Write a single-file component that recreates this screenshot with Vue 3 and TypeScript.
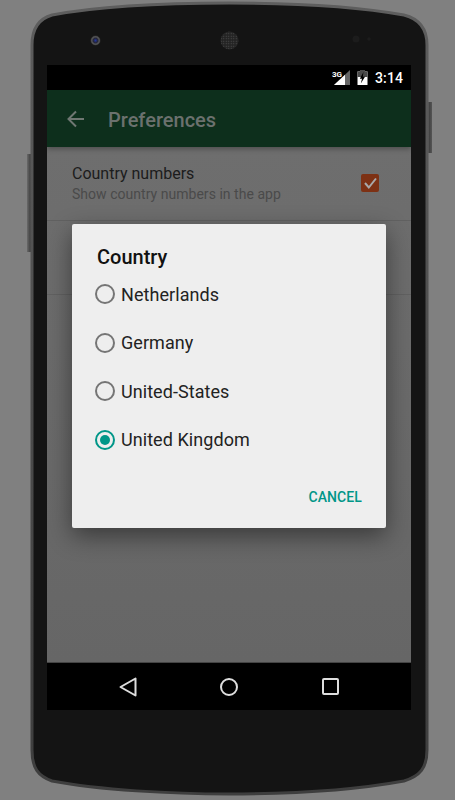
<script setup lang="ts">
const countries = [
  { name: 'Netherlands', checked: false },
  { name: 'Germany', checked: false },
  { name: 'United-States', checked: false },
  { name: 'United Kingdom', checked: true },
]
</script>

<template>
  <div class="stage">
    <div class="phone">
      <svg class="shell" width="455" height="800" viewBox="0 0 455 800" aria-hidden="true">
        <defs>
          <pattern id="mesh" width="2.500" height="2.500" patternUnits="userSpaceOnUse">
            <rect width="2.500" height="2.500" fill="#232323" />
            <circle cx="1.250" cy="1.250" r=".6" fill="#4e4e4e" />
          </pattern>
          <radialGradient id="lens">
            <stop offset="0" stop-color="#2436a0" />
            <stop offset=".45" stop-color="#24263a" />
            <stop offset=".75" stop-color="#585858" />
            <stop offset="1" stop-color="#2a2a2a" />
          </radialGradient>
          <linearGradient id="key" x1="0" x2="1" y1="0" y2="0">
            <stop offset="0" stop-color="#6a6a6a" />
            <stop offset=".5" stop-color="#444" />
            <stop offset="1" stop-color="#555" />
          </linearGradient>
          <linearGradient id="edge" x1="0" x2="0" y1="0" y2="1">
            <stop offset="0" stop-color="#5e5e5e" />
            <stop offset=".5" stop-color="#4c4c4c" />
            <stop offset="1" stop-color="#3e3e3e" />
          </linearGradient>
        </defs>
        <rect x="27" y="154" width="6" height="98" fill="url(#key)" />
        <rect x="427" y="102" width="5" height="51" fill="url(#key)" />
        <path class="body" d="M32 45C32 30 38 19 52 15C100 6 170 3 229 3C290 3 355 6 404 15C420 19 427 30 427 45L427 750C427 768 420 776 404 781C355 790 290 794 229 794C170 794 100 790 52 781C38 776 32 768 32 750Z" />
        <circle cx="95.500" cy="40.500" r="5" fill="url(#lens)" />
        <circle cx="229.500" cy="40.500" r="9" fill="url(#mesh)" />
        <circle cx="356" cy="39" r="3.500" fill="#1c1c1c" />
        <circle cx="369" cy="39" r="1.800" fill="#1c1c1c" />
      </svg>

      <div class="screen">
        <div class="status">
          <span class="net">3G</span>
          <svg class="signal" width="16" height="15" viewBox="0 0 16 15" aria-hidden="true">
            <path d="M0 15L16 0V15Z" fill="#666" />
            <path d="M0 15L11 4.700V15Z" fill="#fff" />
          </svg>
          <svg class="battery" width="11" height="15" viewBox="0 0 11 15" aria-hidden="true">
            <path d="M3 1.500V0H8V1.500H10.500V15H.5V1.500Z" fill="#fff" />
            <path d="M3 1.500V0H8V1.500H10.500V7H.5V1.500Z" fill="#4a4a4a" />
            <path d="M6.500 2L2.800 8.800H5L3.800 13.500L8 6.800H5.800Z" fill="#000" />
          </svg>
          <span class="time">3:14</span>
        </div>

        <div class="appbar">
          <svg class="back" width="18" height="18" viewBox="0 0 18 18" aria-hidden="true">
            <path d="M17 9H2M9 1.500L1.500 9L9 16.500" fill="none" stroke="#6f7772" stroke-width="2" />
          </svg>
          <span class="title">Preferences</span>
        </div>

        <div class="content">
          <div class="pref">
            <div class="pref-text">
              <div class="pref-name">Country numbers</div>
              <div class="pref-desc">Show country numbers in the app</div>
            </div>
            <div class="checkbox">
              <svg width="18" height="18" viewBox="0 0 18 18" aria-hidden="true">
                <path d="M4 9L7.800 13.500L15 4.500" fill="none" stroke="#a9a9a9" stroke-width="2" />
              </svg>
            </div>
          </div>
          <div class="pref-empty"></div>
        </div>

        <div class="navbar">
          <svg width="18" height="20" viewBox="0 0 18 20" aria-hidden="true">
            <path d="M16.500 1.500V18.500L1.500 10Z" fill="none" stroke="#dedede" stroke-width="2" stroke-linejoin="round" />
          </svg>
          <svg width="18" height="18" viewBox="0 0 18 18" aria-hidden="true">
            <circle cx="9" cy="9" r="8" fill="none" stroke="#dedede" stroke-width="2" />
          </svg>
          <svg width="17" height="17" viewBox="0 0 17 17" aria-hidden="true">
            <rect x="1" y="1" width="15" height="15" rx="1" fill="none" stroke="#dedede" stroke-width="2" />
          </svg>
        </div>

        <div class="dialog">
          <h2 class="dialog-title">Country</h2>
          <ul class="options">
            <li v-for="c in countries" :key="c.name" class="option">
              <span class="radio" :class="{ on: c.checked }"></span>
              <span class="label">{{ c.name }}</span>
            </li>
          </ul>
          <div class="actions"><span class="cancel">CANCEL</span></div>
        </div>
      </div>
    </div>
  </div>
</template>

<style>
html, body { margin: 0; background: #808080; }
</style>

<style scoped>
.stage {
  width: 455px;
  height: 800px;
  background: #808080;
  overflow: hidden;
  font-family: Roboto, "Liberation Sans", sans-serif;
}
.phone {
  position: relative;
  width: 455px;
  height: 800px;
  padding: 65px 44px 0 47px;
  box-sizing: border-box;
}
.shell { position: absolute; inset: 0; }
.body { fill: #141414; stroke: url(#edge); stroke-width: 3; }
.screen {
  position: relative;
  width: 364px;
  height: 645px;
  display: flex;
  flex-direction: column;
  overflow: hidden;
}
.status {
  height: 25px;
  flex: none;
  background: #000;
  display: flex;
  align-items: center;
  justify-content: flex-end;
  padding-right: 8px;
  position: relative;
}
.net {
  position: absolute;
  right: 69px;
  top: 5px;
  font-size: 8px;
  line-height: 9px;
  font-weight: 700;
  color: #fff;
}
.signal { margin-right: 7px; }
.battery { margin-right: 7px; }
.time { font-size: 14px; font-weight: 500; color: #fff; letter-spacing: .1px; }
.appbar {
  height: 57px;
  flex: none;
  background: #0d2f1c;
  display: flex;
  align-items: center;
  padding-left: 20px;
  box-shadow: 0 2px 5px rgba(0, 0, 0, .3);
  position: relative;
}
.back { margin-right: 23px; }
.title { font-size: 20px; font-weight: 500; color: #6b716e; margin-top: 2px; }
.content {
  flex: 1;
  background: linear-gradient(#6e6e6e, #666);
}
.pref {
  height: 74px;
  box-sizing: border-box;
  border-bottom: 1px solid #616161;
  display: flex;
  align-items: center;
  padding: 0 32px 0 25px;
}
.pref-text { flex: 1; }
.pref-name { font-size: 16px; line-height: 21px; color: #1c1c1c; }
.pref-desc { font-size: 14px; line-height: 21px; color: #4a4a4a; letter-spacing: .03px; }
.checkbox {
  width: 18px;
  height: 18px;
  margin-top: -1px;
  border-radius: 2px;
  background: #7d3114;
  display: flex;
}
.pref-empty { height: 74px; box-sizing: border-box; border-bottom: 1px solid #616161; }
.navbar {
  height: 48px;
  flex: none;
  background: #000;
  display: flex;
  align-items: center;
  justify-content: space-between;
  padding: 0 72.500px 0 72px;
  border-top: 1px solid #444;
  box-sizing: border-box;
}
.dialog {
  position: absolute;
  left: 25px;
  top: 159px;
  width: 314px;
  height: 304px;
  background: #eee;
  border-radius: 2px;
  box-shadow: 0 8px 24px rgba(0, 0, 0, .45);
  display: flex;
  flex-direction: column;
  box-sizing: border-box;
  padding: 20px 24px 0 23px;
}
.dialog-title {
  margin: 0 0 0 2px;
  font-size: 20px;
  line-height: 26px;
  font-weight: 500;
  color: #111;
}
.options { list-style: none; margin: 0; padding: 0; }
.option {
  height: 48.500px;
  display: flex;
  align-items: center;
  gap: 6px;
}
.radio {
  width: 20px;
  height: 20px;
  box-sizing: border-box;
  border: 2px solid #757575;
  border-radius: 50%;
  display: flex;
  align-items: center;
  justify-content: center;
}
.radio.on { border-color: #009688; }
.radio.on::after {
  content: "";
  width: 10px;
  height: 10px;
  border-radius: 50%;
  background: #009688;
}
.label { font-size: 18px; color: #222; letter-spacing: .06px; }
.actions { margin-top: 25px; display: flex; justify-content: flex-end; }
.cancel { font-size: 14px; font-weight: 500; color: #009688; letter-spacing: .1px; }
</style>
